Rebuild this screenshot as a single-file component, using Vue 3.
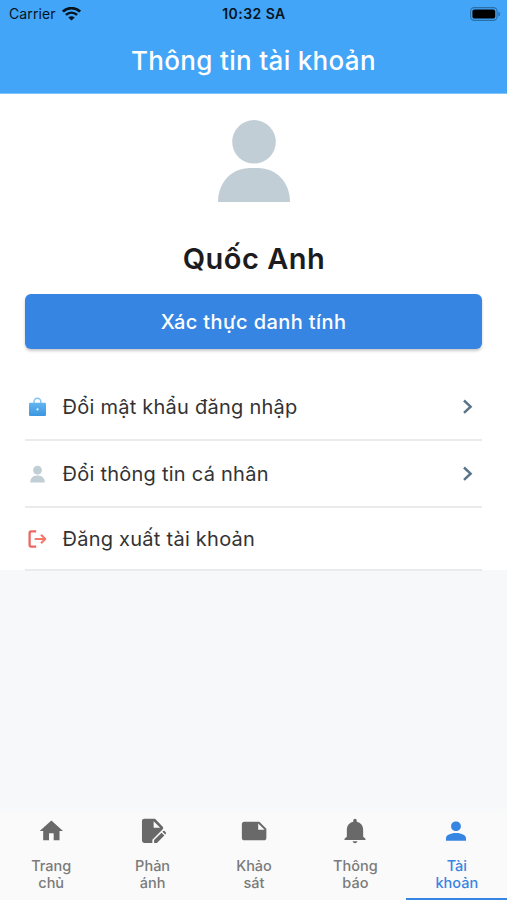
<template>
  <div class="screen">
    <header class="header">
      <div class="status-bar">
        <div class="carrier">
          <span>Carrier</span>
          <svg width="19" height="14" viewBox="0 0 19 14" fill="none">
            <path d="M.9 4.6C5.8 0 13.2 0 18.1 4.6" stroke="#07131f" stroke-width="2.7" />
            <path d="M3.9 7.9C7.2 4.9 11.8 4.9 15.1 7.9" stroke="#07131f" stroke-width="2.5" />
            <path d="M6.3 10.4C8.1 8.7 10.9 8.7 12.7 10.4L9.5 13.5Z" fill="#07131f" />
          </svg>
        </div>
        <span class="time">10:32 SA</span>
        <svg class="battery" width="31" height="14" viewBox="0 0 31 14">
          <rect x=".6" y=".6" width="26.5" height="12.8" rx="3.8" fill="none" stroke="#2b6ea8" stroke-width="1.1" />
          <rect x="2.4" y="2.4" width="22.8" height="9.2" rx="2.2" fill="#000" />
          <path d="M28.4 4.7C30.6 5.3 30.6 8.7 28.4 9.3Z" fill="#2b6ea8" />
        </svg>
      </div>
      <h1 class="title">Thông tin tài khoản</h1>
    </header>

    <main class="profile">
      <svg class="avatar" width="72" height="82" viewBox="0 0 72 82" fill="#c2ced6">
        <circle cx="36" cy="21.8" r="21.8" />
        <path d="M0 82C0 62 14 48 32 48H40C58 48 72 62 72 82Z" />
      </svg>
      <h2 class="name">Quốc Anh</h2>
      <button class="verify-button">Xác thực danh tính</button>

      <ul class="menu">
        <li v-for="item in menu" :key="item.icon" class="menu-item" :class="item.icon">
          <svg v-if="item.icon === 'lock'" class="menu-icon" width="24" height="24" viewBox="0 0 24 24">
            <defs>
              <linearGradient id="lock-fill" x1="0" y1="0" x2="0" y2="1">
                <stop offset="0" stop-color="#62b5f1" />
                <stop offset="1" stop-color="#3c96df" />
              </linearGradient>
            </defs>
            <path d="M9 9V6.6a3.4 3.4 0 0 1 6.8 0V9" fill="none" stroke="#84c5f4" stroke-width="1.5" />
            <rect x="4" y="7.8" width="17" height="13.2" rx="1.2" fill="url(#lock-fill)" />
            <circle cx="12.5" cy="14.4" r="1.1" fill="#e6f5ff" />
          </svg>
          <svg v-else-if="item.icon === 'person'" class="menu-icon" width="24" height="24" viewBox="0 0 24 24" fill="#c2ced6">
            <circle cx="12.5" cy="8.2" r="4.4" />
            <path d="M5.2 20.4C5.2 16.4 8 13.6 11.7 13.6H13.3C17 13.6 19.8 16.4 19.8 20.4Z" />
          </svg>
          <svg v-else class="menu-icon" width="24" height="24" viewBox="0 0 24 24" fill="none" stroke-width="2.3" stroke-linejoin="round">
            <path d="M11.2 4.3H6.2Q4.6 4.3 4.6 5.9V18Q4.6 19.6 6.2 19.6H11.2" stroke="#ed6861" />
            <path d="M9.7 12H20M16 7.7L20.3 12L16 16.3" stroke="#f8776c" stroke-width="2.1" />
          </svg>
          <span class="menu-label">{{ item.label }}</span>
          <svg v-if="item.arrow" class="chevron" width="12" height="16" viewBox="0 0 12 16" fill="none">
            <path d="M2 1.5L8.6 7.7L2 13.9" stroke="#5a7489" stroke-width="2.5" />
          </svg>
        </li>
      </ul>
    </main>

    <nav class="tabs">
      <a v-for="tab in tabs" :key="tab.path" class="tab" :class="{ active: tab.active }">
        <svg width="28" height="28" viewBox="0 0 24 24" fill="currentColor">
          <path :d="tab.path" />
        </svg>
        <span class="tab-label">{{ tab.first }}<br />{{ tab.second }}</span>
      </a>
    </nav>
  </div>
</template>

<script setup>
const menu = [
  { icon: "lock", label: "Đổi mật khẩu đăng nhập", arrow: true },
  { icon: "person", label: "Đổi thông tin cá nhân", arrow: true },
  { icon: "logout", label: "Đăng xuất tài khoản", arrow: false },
];

const tabs = [
  {
    first: "Trang",
    second: "chủ",
    path: "M10.3 20v-6h4v6h5v-8h3L12.3 3 2.3 12h3v8z",
  },
  {
    first: "Phản",
    second: "ánh",
    path: "M5.4 1.5H14.6L21 8.1Q22.2 9.5 21 10.7L12.3 19.4V22.2H5.4A2 2 0 0 1 3.4 20.2V3.5A2 2 0 0 1 5.4 1.5ZM13.4 3.6V9.2H19ZM13.8 19.8L20.2 13.4L22.6 15.8L16.2 22.2H13.8ZM21 12.7L21.6 12.1Q22.2 11.6 22.8 12.1L23.9 13.2Q24.4 13.8 23.9 14.4L23.3 15Z",
  },
  {
    first: "Khảo",
    second: "sát",
    path: "M22.6 10l-6-6H3.6c-1.1 0-2 .9-2 2v12.01c0 1.1.9 1.99 2 1.99l17-.01c1.1 0 2-.89 2-1.99v-8zm-7-4.5l5.5 5.5H15.6V5.5z",
  },
  {
    first: "Thông",
    second: "báo",
    path: "M12 22.4c1.1 0 2-.7 2-1.6h-4c0 .9.9 1.6 2 1.6zm7-5.4V11c0-3.6-2-6.2-5.5-7V3.1a1.5 1.5 0 0 0-3 0V4C7 4.8 5 7.4 5 11v6L3 18.7V19.7h18v-1z",
  },
  {
    first: "Tài",
    second: "khoản",
    active: true,
    path: "M12 12c2.4 0 4.2-1.8 4.2-4.1S14.4 3.8 12 3.8 7.8 5.5 7.8 7.9 9.6 12 12 12zm0 1.8c-3.3 0-8.6 1.3-8.6 4.5V20.3h17.2V18.3c0-3.2-5.3-4.5-8.6-4.5z",
  },
];
</script>

<style>
body {
  margin: 0;
}
</style>

<style scoped>
.screen {
  display: flex;
  flex-direction: column;
  height: 900px;
  background: #f6f8fa;
  font-family: Inter, "Noto Sans", sans-serif;
  color: #333;
}

.header {
  height: 94px;
  box-sizing: border-box;
  background: #42a5f7;
  border-bottom: 1px solid #81c2f8;
}

.status-bar {
  display: grid;
  grid-template-columns: 1fr auto 1fr;
  align-items: center;
  height: 27px;
  padding: 0 6px 0 9px;
  font-size: 14px;
  line-height: 27px;
  color: #07131f;
}

.carrier {
  display: flex;
  align-items: center;
  gap: 6px;
  letter-spacing: 0.1px;
}

.time {
  margin-right: 2px;
  font-weight: 600;
  letter-spacing: 0.45px;
}

.battery {
  justify-self: end;
}

.title {
  margin: 15px 0 0;
  font-size: 26px;
  font-weight: 500;
  line-height: 38px;
  letter-spacing: 0.32px;
  text-align: center;
  color: #fff;
}

.profile {
  display: flex;
  flex-direction: column;
  box-sizing: border-box;
  height: 476px;
  padding: 26px 25px 0;
  background: #fff;
}

.avatar {
  align-self: center;
  flex-shrink: 0;
}

.name {
  margin: 37px 0 0;
  font-size: 29px;
  font-weight: 600;
  line-height: 40px;
  letter-spacing: 0.5px;
  text-indent: 1px;
  text-align: center;
  color: #1c1c1e;
}

.verify-button {
  height: 55px;
  flex-shrink: 0;
  margin: 15px 0 0;
  padding: 0;
  border: none;
  border-radius: 6px;
  background: #3685e2;
  box-shadow: 0 2px 3px rgba(0, 0, 0, 0.22);
  font-family: inherit;
  font-size: 20px;
  font-weight: 500;
  letter-spacing: 0.4px;
  color: #fff;
}

.menu {
  margin: 25px 0 0;
  padding: 0;
  list-style: none;
}

.menu-item {
  display: flex;
  align-items: center;
  box-sizing: border-box;
  height: 67px;
  border-bottom: 2px solid #e9ebec;
}

.menu-item.logout {
  height: 63px;
}

.menu-label {
  flex: 1;
  margin-left: 13.5px;
  font-size: 20px;
  line-height: 30px;
  letter-spacing: 0.25px;
}

.chevron {
  margin-right: 8px;
}

.tabs {
  display: flex;
  height: 96px;
  margin-top: auto;
  background: linear-gradient(#f6f8fa, #fafafa 10px);
}

.tab {
  display: flex;
  flex: 1;
  flex-direction: column;
  align-items: center;
  box-sizing: border-box;
  padding-top: 12.5px;
  border-bottom: 2px solid transparent;
  color: #696969;
}

.tab-label {
  margin-top: 12.5px;
  padding-left: 1px;
  font-size: 14.5px;
  font-weight: 500;
  line-height: 17px;
  text-align: center;
  color: #7b7b7b;
}

.tab.active {
  border-color: #3685e2;
  color: #3685e2;
}

.tab.active .tab-label {
  color: #3685e2;
}
</style>
